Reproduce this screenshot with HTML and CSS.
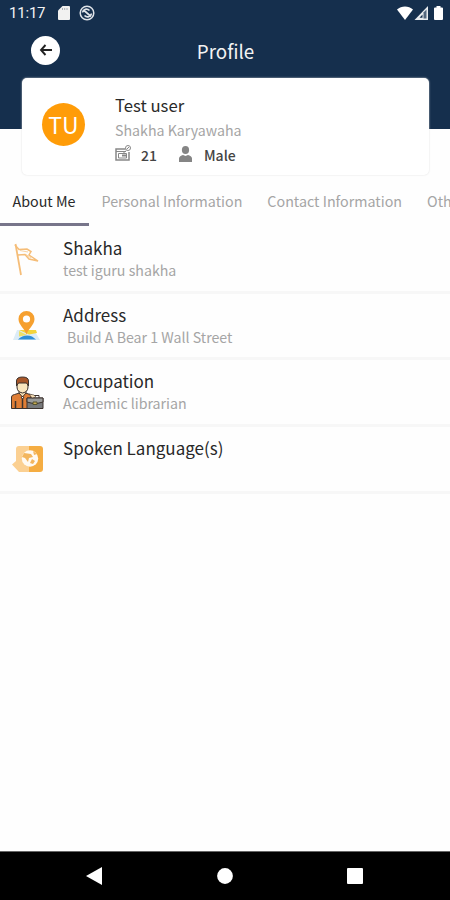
FILE: index.html
```
<!DOCTYPE html>
<html lang="en">
<head>
    <meta charset="UTF-8">
    <meta name="viewport" content="width=device-width, initial-scale=1.0">
    <title>Profile</title>
    <link rel="stylesheet" href="styles.css">
</head>
<body>

    <header class="header">
        <div class="status-bar">
            <span class="time">11:17</span>
            <svg class="sd-icon" width="12" height="14" viewBox="0 0 12 14"><path d="M4.500 0H11a1 1 0 0 1 1 1v12a1 1 0 0 1-1 1H1a1 1 0 0 1-1-1V4.500z" fill="#f1f1f1"/><path d="M4.500 2v2M6.700 2v2M9 2v2" stroke="#a9b0b8"/></svg>
            <svg class="sync-icon" width="16" height="16" viewBox="0 0 16 16" fill="none" stroke="#dfe3e8"><circle cx="8" cy="8" r="6.800" stroke-width="1.500"/><path d="M3.500 7.500C4 4 8 3 10.500 5.500M12.500 8.500C12 12 8 13 5.500 10.500M4.500 5l7.500 6.500" stroke-width="1.700"/></svg>
            <svg class="signal-icons" width="48" height="15" viewBox="0 0 48 15"><path d="M0 3.500C4.500-.5 11.500-.5 16 3.500L8 14z" fill="#fff"/><path d="M31 0v14H17.500z" fill="#e9ecef"/><path d="M26.500 6.500L29.500 3.500V12.500H26.500z" fill="#53677e"/><path d="M22.500 11.800L25.500 8.500v3.300z" fill="#152f4d"/><path d="M39.500 1.500V0h4v1.500H45a1 1 0 0 1 1 1V13a1 1 0 0 1-1 1h-7a1 1 0 0 1-1-1V2.500a1 1 0 0 1 1-1z" fill="#fff"/></svg>
        </div>
        <div class="title-bar">
            <button class="back" aria-label="Back">
                <svg width="14" height="12" viewBox="0 0 14 12" fill="none" stroke="#222" stroke-width="1.900"><path d="M6.500 1L2 6l4.500 5M2 6h11"/></svg>
            </button>
            <h1>Profile</h1>
        </div>
    </header>

    <section class="card">
        <div class="avatar">TU</div>
        <div class="user">
            <div class="name">Test user</div>
            <div class="branch">Shakha Karyawaha</div>
            <div class="facts">
                <svg class="age-icon" width="17" height="17" viewBox="0 0 17 17" fill="none" stroke="#888"><path d="M10.500 4H1v11h13V7" stroke-width="1.500"/><path d="M1 6.500h10M3.500 8.500h8v4.500h-8z"/><path d="M7 10.500h4" stroke-width="2"/><circle cx="13" cy="3" r="2.500"/><path d="M11 5.500l-3 3M12 4l2-2"/></svg>
                <span class="age">21</span>
                <svg class="person-icon" width="13" height="16" viewBox="0 0 13 16" fill="#858585"><ellipse cx="6.500" cy="4" rx="3.600" ry="4"/><path d="M0 16v-3.500C0 10.500 2 9.500 4 9l2.500 1L9 9c2 .5 4 1.500 4 3.500V16z"/></svg>
                <span class="gender">Male</span>
            </div>
        </div>
    </section>

    <nav class="tabs">
        <a class="tab active">About Me</a>
        <a class="tab">Personal Information</a>
        <a class="tab">Contact Information</a>
        <a class="tab">Oth</a>
    </nav>

    <main class="list">
        <div class="row">
            <svg class="icon" width="36" height="36" viewBox="0 0 36 36" fill="none" stroke="#f5bd78"><path d="M7.500 3L13 34" stroke-width="1.800"/><path d="M7 4l4 4.500 8-.5 4 2.500-2 3.500 9 6-9-2-4-4.500-7 .5" stroke-width="1.500"/><path d="M12 9.500l8 1.500M18 13.500l5 3.500" stroke="#f8d3a3"/></svg>
            <div class="info">
                <div class="label">Shakha</div>
                <div class="value">test iguru shakha</div>
            </div>
        </div>
        <div class="row">
            <svg class="icon" width="36" height="36" viewBox="0 0 36 36"><path d="M9 23h17l6 10H5z" fill="#dcecf7"/><path d="M11 23l17 0 1 3-8 1.500z" fill="#f4d43c"/><path d="M11 24l8 4-8 1.500z" fill="#eddf69"/><path d="M10 32.500c4-4.500 10-5 14-3l4 3z" fill="#2f8fd8"/><path d="M18.500 27.500C17 22 10.500 18 10.500 12a8 8 0 0 1 16 0c0 6-6.500 10-8 15.500z" fill="#f6a02f"/><circle cx="18.500" cy="12" r="3.600" fill="#fff"/></svg>
            <div class="info">
                <div class="label">Address</div>
                <div class="value address">Build A Bear 1 Wall Street</div>
            </div>
        </div>
        <div class="row">
            <svg class="icon" width="36" height="36" viewBox="0 0 36 36" stroke="#3c332e" stroke-width="1"><path d="M3.500 34.500V23q0-2 3-2.500l5-1.500h6l6 2q3 1 3 3v10.500z" fill="#df7e36"/><path d="M11 19l3.500 4 3.500-4v-3h-7z" fill="#f7dfb6"/><path d="M9 8v5q0 5 5.500 6 5.500-1 5.500-6V8z" fill="#fae6be"/><path d="M8.500 12V7q0-4 6-4t6 4v5l-2-3h-8z" fill="#a85729"/><path d="M14.500 22v12M7.500 27v7" stroke-width="1.500"/><path d="M13 23l1.500 2 1.500-2" fill="#fff"/><path d="M23 24v-2.500h8V24" fill="none"/><path d="M19 24h16v10.500H19z" fill="#77797b"/><path d="M19 24h16v4l-8 2-8-2z" fill="#9b9c9b"/><path d="M25 28h4v2.500h-4z" fill="#c7ac52" stroke="#56522f"/><path d="M21 20l5 1 2 2-4 1z" fill="#f7dfb6" stroke-width=".6"/></svg>
            <div class="info">
                <div class="label">Occupation</div>
                <div class="value">Academic librarian</div>
            </div>
        </div>
        <div class="row">
            <svg class="icon" width="36" height="36" viewBox="0 0 36 36"><path d="M21 5h11q3 0 3 3v20q0 3-3 3H21z" fill="#f5ad42"/><path d="M21 5H11q-3 0-3 3v12l-4 3.500L11 31h10z" fill="#fbd092"/><circle cx="22" cy="17.500" r="8.200" fill="#fffaf2"/><path d="M16 12l7 1 2 3-4 1-1 4-3-4-3-1zM24 18l3 2-2 3-3-1zM25 10l4 3-3 1z" fill="#f3b65e"/></svg>
            <div class="info">
                <div class="label">Spoken Language(s)</div>
            </div>
        </div>
    </main>

    <footer class="nav-bar">
        <svg width="16" height="18" viewBox="0 0 16 18"><path d="M16 0v18L0 9z" fill="#fff"/></svg>
        <svg width="16" height="18" viewBox="0 0 16 18"><circle cx="8" cy="9" r="7.900" fill="#fff"/></svg>
        <svg width="16" height="18" viewBox="0 0 16 18"><rect y="1" width="16" height="16" rx="1" fill="#fff"/></svg>
    </footer>

</body>
</html>
```
FILE: styles.css
```
body {
    margin: 0;
    height: 900px;
    display: flex;
    flex-direction: column;
    overflow: hidden;
    background-color: #fefefe;
    color: #292929;
    font-family: 'Noto Sans CJK SC', 'Open Sans', sans-serif;
}

svg {
    display: block;
    flex-shrink: 0;
}

.header {
    height: 129px;
    flex-shrink: 0;
    background-color: #152f4d;
    color: #f3f3f3;
}

.status-bar {
    height: 26px;
    display: flex;
    align-items: center;
    padding: 0 5px 0 9px;
}

.time {
    width: 49px;
    font-family: Roboto, sans-serif;
    font-size: 15px;
    letter-spacing: -0.2px;
}

.sync-icon {
    margin-left: 9px;
}

.signal-icons {
    margin-left: auto;
}

.title-bar {
    height: 48px;
    display: grid;
    grid-template-columns: 60px 1fr 60px;
    align-items: center;
}

.back {
    width: 29px;
    height: 29px;
    margin-left: 31px;
    padding: 0;
    display: flex;
    align-items: center;
    justify-content: center;
    background-color: #fff;
    border: none;
    border-radius: 50%;
}

h1 {
    margin: 2px 0 0 1px;
    font-size: 18.8px;
    font-weight: 400;
    line-height: 28px;
    text-align: center;
}

.card {
    height: 97px;
    flex-shrink: 0;
    margin: -51px 21px 0 22px;
    box-sizing: border-box;
    display: flex;
    background-color: #fff;
    border-radius: 5px;
    box-shadow: 0 0 2px #ddd;
}

.avatar {
    width: 43px;
    height: 43px;
    margin: 25px 30px 0 20px;
    border-radius: 50%;
    background-color: #ff9c08;
    color: #fff;
    font-size: 23px;
    line-height: 42px;
    text-align: center;
}

.user {
    padding-top: 14px;
}

.name {
    font-size: 16.7px;
    line-height: 26px;
}

.branch {
    font-size: 14.2px;
    line-height: 24px;
    color: #a5a5a5;
}

.facts {
    height: 26px;
    display: flex;
    align-items: center;
    font-size: 14px;
    font-weight: 500;
    color: #444;
}

.age-icon,
.person-icon {
    margin-bottom: 3px;
}

.age {
    width: 38px;
    margin-left: 9px;
}

.gender {
    margin-left: 12px;
}

.tabs {
    height: 51px;
    flex-shrink: 0;
    display: flex;
    overflow: hidden;
    white-space: nowrap;
}

.tab {
    box-sizing: border-box;
    height: 51px;
    flex-shrink: 0;
    padding: 0 12.5px;
    font-size: 14.3px;
    line-height: 51px;
    color: #a5a5a5;
}

.tab.active {
    width: 89px;
    color: #292929;
    border-bottom: 3px solid #77758a;
}

.list {
    padding-top: 1px;
}

.row {
    height: 66.7px;
    box-sizing: border-box;
    display: flex;
    border-bottom: 3px solid #f7f7f7;
}

.icon {
    margin: 13.5px 19px 0 8px;
}

.info {
    padding-top: 8px;
}

.label {
    font-size: 17px;
    line-height: 26px;
}

.value {
    font-size: 14.2px;
    line-height: 19px;
    color: #a5a5a5;
}

.address {
    padding-left: 4px;
}

.nav-bar {
    height: 49px;
    flex-shrink: 0;
    box-sizing: border-box;
    margin-top: auto;
    padding: 0 87px 0 86px;
    display: flex;
    align-items: center;
    justify-content: space-between;
    background-color: #000;
    border-top: 1px solid #666;
}
```
